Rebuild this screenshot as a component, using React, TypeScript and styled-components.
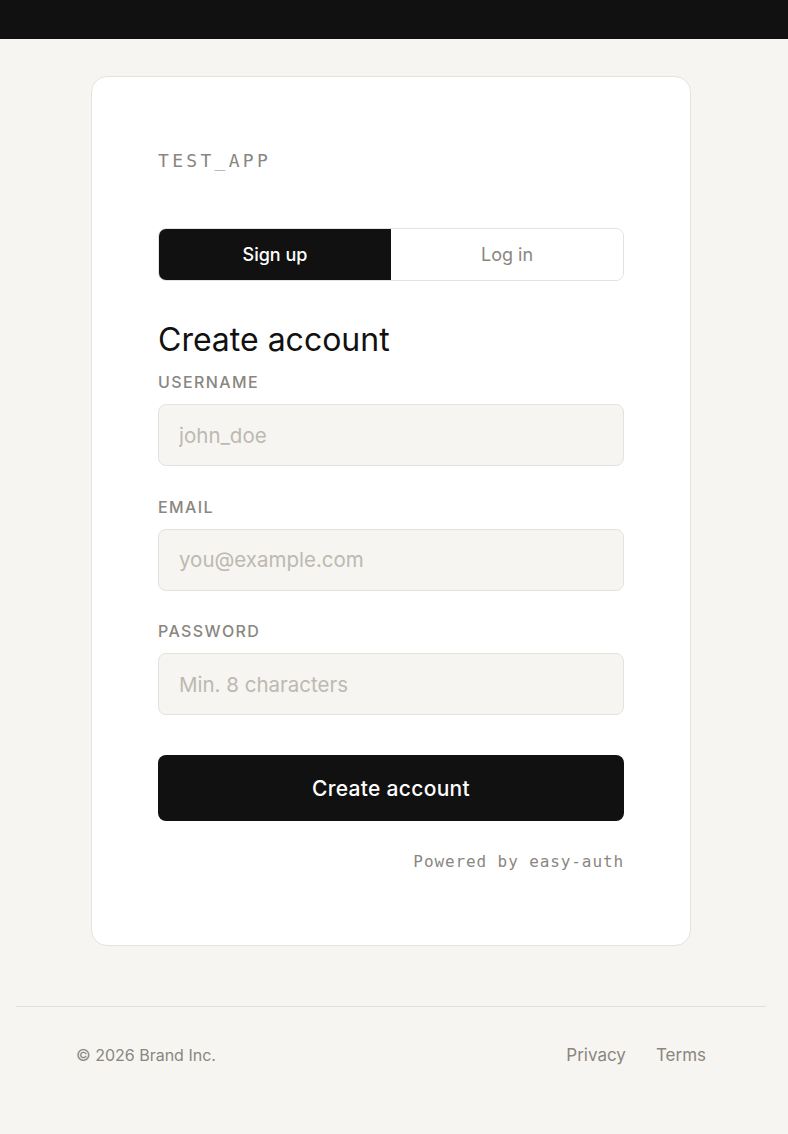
import React from "react";
import styled, { createGlobalStyle } from "styled-components";

const GlobalStyle = createGlobalStyle`
  * { box-sizing: border-box; }
  html, body { margin: 0; padding: 0; background: #f6f5f1; }
  body { font-family: Inter, "Noto Sans", sans-serif; color: #111; }
`;

const Page = styled.div`
  min-height: 1134px;
  padding-right: 6px;
  display: flex;
  flex-direction: column;
`;

const TopBar = styled.div`
  height: 39px;
  background: #111111;
  margin-right: -6px;
`;

const Main = styled.main`
  display: flex;
  justify-content: center;
  padding-top: 37px;
`;

const Card = styled.div`
  width: 600px;
  background: #ffffff;
  border: 1px solid #e6e3dd;
  border-radius: 16px;
  padding: 72px 66px 73px;
  display: flex;
  flex-direction: column;
`;

const Brand = styled.div`
  font-family: "DejaVu Sans Mono", "Liberation Mono", monospace;
  font-size: 18px;
  line-height: 24px;
  letter-spacing: 3.3px;
  font-weight: 400;
  color: #8a8680;
`;

const Tabs = styled.div`
  margin-top: 55px;
  display: grid;
  grid-template-columns: 1fr 1fr;
  height: 53px;
  border: 1px solid #e5e2dc;
  border-radius: 8px;
  overflow: hidden;
`;

const Tab = styled.button<{ $active?: boolean }>`
  border: none;
  margin: 0;
  font-family: inherit;
  font-size: 18px;
  font-weight: ${(p) => (p.$active ? 500 : 400)};
  background: ${(p) => (p.$active ? "#111111" : "#ffffff")};
  color: ${(p) => (p.$active ? "#ffffff" : "#8a8680")};
  cursor: pointer;
`;

const Heading = styled.h1`
  margin: 40px 0 0;
  font-size: 32px;
  line-height: 38px;
  font-weight: 400;
  color: #111;
`;

const Form = styled.form`
  margin-top: 13px;
  display: flex;
  flex-direction: column;
  gap: 30.5px;
`;

const Field = styled.label`
  display: flex;
  flex-direction: column;
  gap: 12px;
`;

const Label = styled.span`
  font-size: 16px;
  line-height: 20px;
  font-weight: 500;
  letter-spacing: 1.4px;
  text-transform: uppercase;
  color: #8a8680;
`;

const Input = styled.input`
  height: 62px;
  width: 100%;
  padding: 0 20px;
  background: #f6f5f1;
  border: 1px solid #e5e2dc;
  border-radius: 8px;
  font-family: inherit;
  font-size: 20.5px;
  color: #111;
  outline: none;
  &::placeholder { color: #bdb9b2; }
`;

const Submit = styled.button`
  margin-top: 9.5px;
  height: 66px;
  border: none;
  border-radius: 8px;
  background: #111111;
  color: #ffffff;
  font-family: inherit;
  font-size: 21px;
  font-weight: 500;
  letter-spacing: 0.3px;
  cursor: pointer;
`;

const Powered = styled.div`
  margin-top: 31px;
  text-align: right;
  font-family: "DejaVu Sans Mono", "Liberation Mono", monospace;
  font-size: 16px;
  line-height: 20px;
  letter-spacing: 0.9px;
  color: #8a8680;
`;

const Footer = styled.footer`
  margin: 60px 16px 0;
  border-top: 1px solid #e3e0da;
  padding: 38px 60px 0;
  display: flex;
  justify-content: space-between;
  align-items: center;
  font-size: 16px;
  line-height: 20px;
  color: #8a8680;
`;

const FooterLinks = styled.nav`
  display: flex;
  gap: 30px;
`;

const FooterLink = styled.a`
  color: #8a8680;
  text-decoration: none;
  font-size: 17px;
`;

export default function App() {
  return (
    <>
      <GlobalStyle />
      <Page>
        <TopBar />
        <Main>
          <Card>
            <Brand>TEST_APP</Brand>
            <Tabs>
              <Tab $active type="button">Sign up</Tab>
              <Tab type="button">Log in</Tab>
            </Tabs>
            <Heading>Create account</Heading>
            <Form onSubmit={(e) => e.preventDefault()}>
              <Field>
                <Label>Username</Label>
                <Input placeholder="john_doe" />
              </Field>
              <Field>
                <Label>Email</Label>
                <Input type="email" placeholder="you@example.com" />
              </Field>
              <Field>
                <Label>Password</Label>
                <Input type="password" placeholder="Min. 8 characters" />
              </Field>
              <Submit type="submit">Create account</Submit>
            </Form>
            <Powered>Powered by easy-auth</Powered>
          </Card>
        </Main>
        <Footer>
          <span>© 2026 Brand Inc.</span>
          <FooterLinks>
            <FooterLink href="#">Privacy</FooterLink>
            <FooterLink href="#">Terms</FooterLink>
          </FooterLinks>
        </Footer>
      </Page>
    </>
  );
}
